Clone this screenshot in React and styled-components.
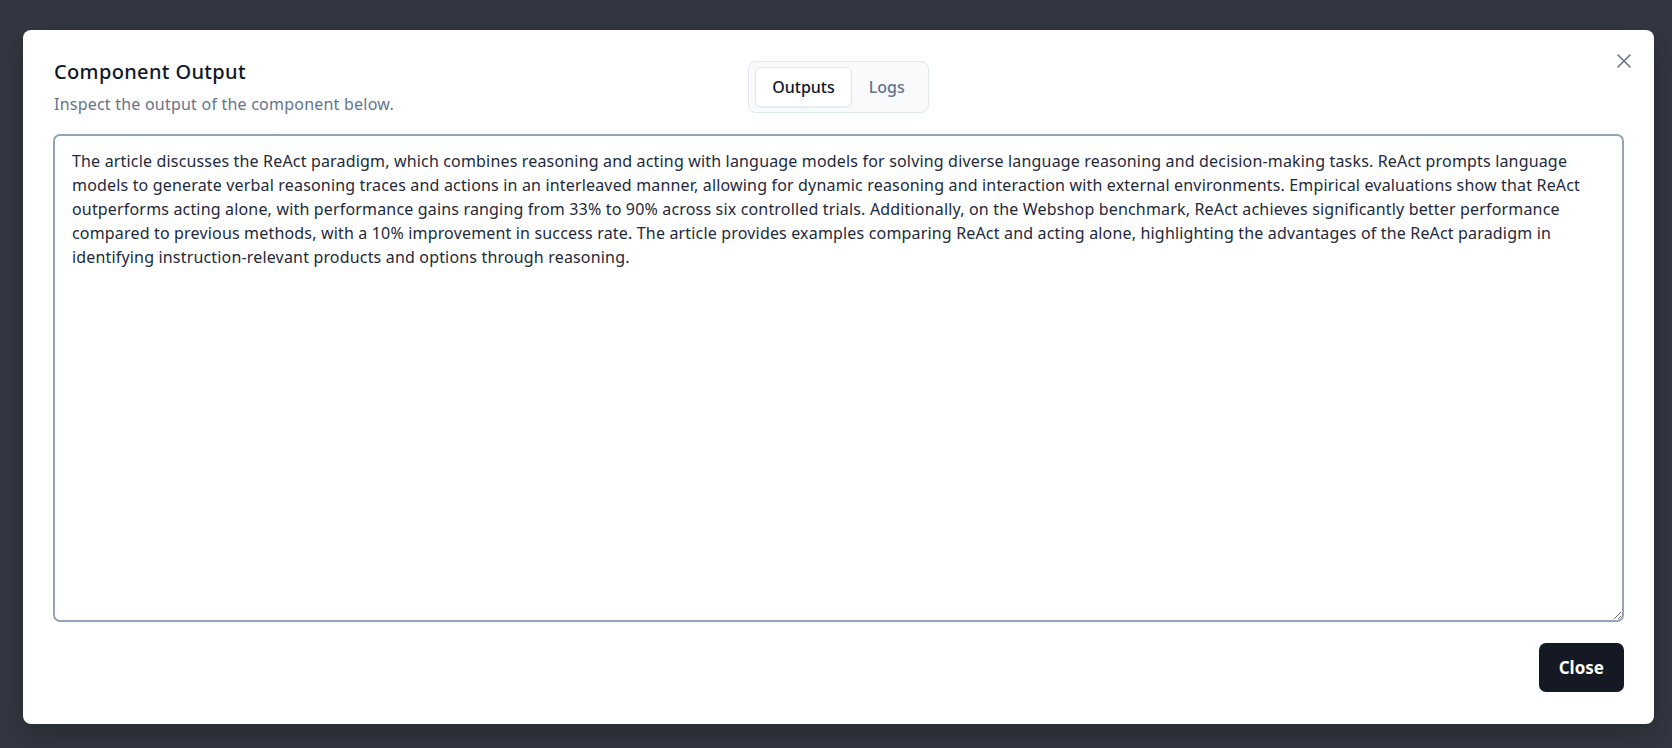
import React, { useState } from "react";
import styled, { createGlobalStyle } from "styled-components";
import { X } from "lucide-react";

const GlobalStyle = createGlobalStyle`
  html, body {
    margin: 0;
    height: 100%;
    background: #333741;
    overflow: hidden;
  }
  body {
    font-family: "Noto Sans", "Open Sans", sans-serif;
    color: #0f172a;
  }
  * { box-sizing: border-box; }
`;

const Backdrop = styled.div`
  height: 100vh;
  padding: 30px 0 0 23px;
`;

const Dialog = styled.section`
  position: relative;
  width: 1631px;
  height: 694px;
  background: #ffffff;
  border-radius: 8px;
  box-shadow: 0 10px 30px rgba(0, 0, 0, 0.25);
  padding: 28px 30px 31px 30px;
  display: flex;
  flex-direction: column;
`;

const Header = styled.header`
  display: grid;
  grid-template-columns: 1fr auto 1fr;
  align-items: start;
`;

const TitleBlock = styled.div`
  display: flex;
  flex-direction: column;
  gap: 6px;
  padding-left: 1px;
`;

const Title = styled.h2`
  margin: 0;
  font-size: 20px;
  line-height: 28px;
  font-weight: 500;
  letter-spacing: 0.35px;
  color: #0f172a;
`;

const Subtitle = styled.p`
  margin: 0;
  font-size: 16px;
  line-height: 24px;
  letter-spacing: 0.22px;
  color: #64748b;
`;

const TabList = styled.div`
  margin-top: 3px;
  display: flex;
  padding: 5px 6px;
  background: #f8fafc;
  border: 1px solid #e2e8f0;
  border-radius: 8px;
`;

const Tab = styled.button`
  height: 40px;
  padding: 0 16px;
  border-radius: 6px;
  font-family: inherit;
  font-size: 16px;
  font-weight: 500;
  cursor: pointer;
  border: 1px solid ${(p) => (p.$active ? "#e2e8f0" : "transparent")};
  background: ${(p) => (p.$active ? "#ffffff" : "transparent")};
  color: ${(p) => (p.$active ? "#0f172a" : "#64748b")};
  box-shadow: ${(p) => (p.$active ? "0 1px 2px rgba(15, 23, 42, 0.05)" : "none")};
`;

const CloseIcon = styled.button`
  position: absolute;
  top: 19px;
  right: 18px;
  width: 24px;
  height: 24px;
  padding: 0;
  border: none;
  background: none;
  color: #6b7280;
  display: flex;
  align-items: center;
  justify-content: center;
  cursor: pointer;
`;

const Output = styled.textarea`
  margin-top: 18px;
  height: 488px;
  width: 100%;
  resize: vertical;
  border: 2px solid #94a3b8;
  border-radius: 7px;
  padding: 13px 17px;
  font-family: "Noto Sans", "Open Sans", sans-serif;
  font-size: 16px;
  line-height: 24px;
  letter-spacing: 0.17px;
  color: #1e293b;
  background: #ffffff;
  outline: none;
`;

const Footer = styled.footer`
  margin-top: 21px;
  display: flex;
  justify-content: flex-end;
`;

const PrimaryButton = styled.button`
  height: 49px;
  padding: 0 20px;
  border: none;
  border-radius: 7px;
  background: #141923;
  color: #ffffff;
  font-family: inherit;
  font-size: 17px;
  font-weight: 700;
  cursor: pointer;
`;

const summary =
  "The article discusses the ReAct paradigm, which combines reasoning and acting with language models for solving diverse language reasoning and decision-making tasks. ReAct prompts language models to generate verbal reasoning traces and actions in an interleaved manner, allowing for dynamic reasoning and interaction with external environments. Empirical evaluations show that ReAct outperforms acting alone, with performance gains ranging from 33% to 90% across six controlled trials. Additionally, on the Webshop benchmark, ReAct achieves significantly better performance compared to previous methods, with a 10% improvement in success rate. The article provides examples comparing ReAct and acting alone, highlighting the advantages of the ReAct paradigm in identifying instruction-relevant products and options through reasoning.";

export default function App() {
  const [tab, setTab] = useState("outputs");
  return (
    <>
      <GlobalStyle />
      <Backdrop>
        <Dialog>
          <CloseIcon aria-label="Close">
            <X size={24} strokeWidth={1.6} />
          </CloseIcon>
          <Header>
            <TitleBlock>
              <Title>Component Output</Title>
              <Subtitle>Inspect the output of the component below.</Subtitle>
            </TitleBlock>
            <TabList>
              <Tab $active={tab === "outputs"} onClick={() => setTab("outputs")}>
                Outputs
              </Tab>
              <Tab $active={tab === "logs"} onClick={() => setTab("logs")}>
                Logs
              </Tab>
            </TabList>
            <div />
          </Header>
          <Output readOnly value={summary} />
          <Footer>
            <PrimaryButton>Close</PrimaryButton>
          </Footer>
        </Dialog>
      </Backdrop>
    </>
  );
}
